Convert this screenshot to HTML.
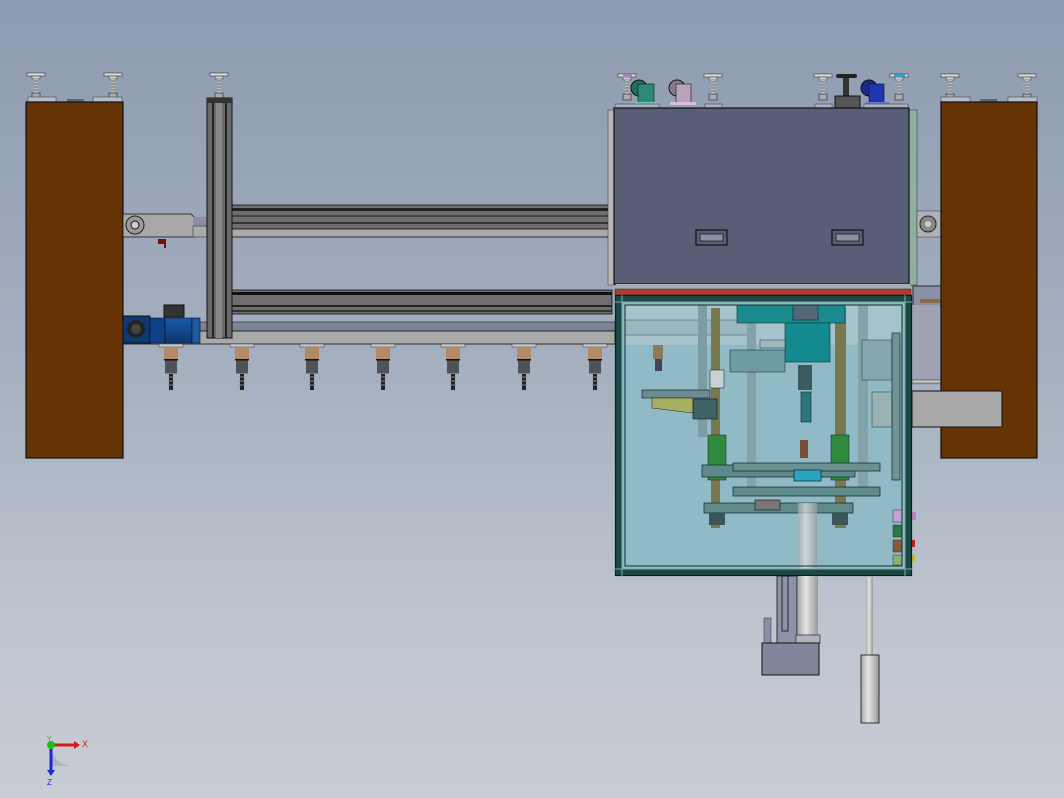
<!DOCTYPE html>
<html><head><meta charset="utf-8"><style>
html,body{margin:0;padding:0;width:1064px;height:798px;overflow:hidden}
body{background:linear-gradient(#8d9bb0 0%,#a4afbf 45%,#c0c6d0 80%,#c8ccd4 100%)}
svg{display:block}
</style></head><body>
<svg width="1064" height="798" viewBox="0 0 1064 798" xmlns="http://www.w3.org/2000/svg" font-family="Liberation Sans, sans-serif">
<defs>
<linearGradient id="cyl" x1="0" x2="1"><stop offset="0" stop-color="#aaa"/><stop offset=".4" stop-color="#e4e4e4"/><stop offset="1" stop-color="#999"/></linearGradient>
<linearGradient id="blu" x1="0" y1="0" x2="0" y2="1"><stop offset="0" stop-color="#1a5aa8"/><stop offset="1" stop-color="#0c3670"/></linearGradient>
<g id="foot"><rect x="-9" y="0" width="18" height="3" fill="#ddd" stroke="#333" stroke-width=".6"/><rect x="-4" y="3" width="8" height="3" fill="#ccc" stroke="#333" stroke-width=".5"/><rect x="-2" y="6" width="4" height="14" fill="#bbb"/><path d="M-2 8h4M-2 11h4M-2 14h4M-2 17h4" stroke="#555" stroke-width=".8"/><rect x="-4" y="20" width="8" height="6" fill="#aaa" stroke="#222" stroke-width=".6"/></g>
<g id="spin"><rect x="-12" y="0" width="24" height="3" fill="#c8c8cc" stroke="#333" stroke-width=".5"/><rect x="-7" y="3" width="14" height="12" fill="#b48a66"/><rect x="-7" y="15" width="14" height="1.5" fill="#111"/><rect x="-6" y="16.5" width="12" height="13" fill="#505258"/><rect x="-2" y="30" width="4" height="16" fill="#222"/><path d="M-3 33h6M-3 37h6M-3 41h6" stroke="#888" stroke-width="1"/></g>
</defs>

<!-- left brown panel -->
<use href="#foot" x="36" y="73"/><use href="#foot" x="113" y="73"/>
<rect x="28" y="97" width="28" height="5" fill="#b8bcc8" stroke="#333" stroke-width=".5"/>
<rect x="93" y="97" width="29" height="5" fill="#b8bcc8" stroke="#333" stroke-width=".5"/>
<rect x="67" y="99" width="17" height="3" fill="#666"/>
<rect x="26" y="102" width="97" height="356" fill="#663404" stroke="#111" stroke-width="1.2"/>

<!-- upper rail -->
<rect x="232" y="205" width="380" height="24" fill="#6e6e6e" stroke="#111" stroke-width=".8"/>
<rect x="232" y="208" width="380" height="3" fill="#222"/>
<rect x="232" y="215" width="380" height="2" fill="#444"/>
<rect x="232" y="222" width="380" height="2" fill="#333"/>
<rect x="232" y="229" width="380" height="8" fill="#aaa" stroke="#111" stroke-width=".8"/>
<!-- left bracket -->
<path d="M123 214h68l3 3v20h-71z" fill="#a8a8a8" stroke="#111" stroke-width=".8"/>
<rect x="193" y="217" width="14" height="9" fill="#8b8fa2"/>
<rect x="193" y="226" width="14" height="11" fill="#aaa" stroke="#222" stroke-width=".5"/>
<circle cx="135" cy="225" r="9" fill="#999" stroke="#222"/><circle cx="135" cy="225" r="4" fill="#ccc" stroke="#111"/>
<path d="M158 239h8v9h-2v-4h-6z" fill="#7a1010"/>
<!-- lower rail -->
<rect x="232" y="290" width="380" height="24" fill="#6e6e6e" stroke="#111" stroke-width=".8"/>
<rect x="232" y="292" width="380" height="3" fill="#111"/>
<rect x="232" y="305" width="380" height="2" fill="#222"/>
<rect x="232" y="310" width="380" height="2" fill="#333"/>
<rect x="200" y="322" width="415" height="9" fill="#7e8498" stroke="#222" stroke-width=".6"/>
<rect x="123" y="331" width="492" height="13" fill="#a9a9aa" stroke="#111" stroke-width=".8"/>
<!-- vertical post -->
<use href="#foot" x="219" y="73"/>
<rect x="207" y="98" width="25" height="240" fill="#6a6a6a" stroke="#111" stroke-width="1"/>
<rect x="207" y="98" width="25" height="5" fill="#333"/>
<rect x="212" y="103" width="2" height="235" fill="#222"/><rect x="225" y="103" width="2" height="235" fill="#222"/>
<rect x="216" y="103" width="6" height="235" fill="#888"/>
<!-- motor -->
<rect x="123" y="316" width="27" height="27" fill="#0d3a74" stroke="#111"/>
<circle cx="136" cy="329" r="9" fill="#222"/><circle cx="136" cy="329" r="5" fill="#444"/>
<rect x="150" y="318" width="15" height="25" fill="#0f4188" stroke="#111" stroke-width=".6"/>
<rect x="165" y="318" width="27" height="25" fill="url(#blu)" stroke="#111" stroke-width=".6"/>
<rect x="192" y="318" width="8" height="25" fill="#1b58a6" stroke="#111" stroke-width=".6"/>
<rect x="164" y="305" width="20" height="12" fill="#333" stroke="#111"/>
<!-- spindles -->
<use href="#spin" x="171" y="344"/><use href="#spin" x="242" y="344"/><use href="#spin" x="312" y="344"/><use href="#spin" x="383" y="344"/><use href="#spin" x="453" y="344"/><use href="#spin" x="524" y="344"/><use href="#spin" x="595" y="344"/><use href="#spin" x="663" y="344"/>

<!-- top feet & casters right assembly -->
<use href="#foot" x="627" y="74"/><use href="#foot" x="713" y="74"/><use href="#foot" x="823" y="74"/><use href="#foot" x="899" y="74"/><use href="#foot" x="950" y="74"/><use href="#foot" x="1027" y="74"/>
<rect x="623" y="74" width="9" height="3" fill="#b27fc0"/><rect x="894" y="74" width="11" height="3" fill="#3a9ac0"/>
<g fill="#333"><rect x="836" y="74" width="21" height="4" rx="2" fill="#222"/><rect x="843" y="78" width="6" height="18"/><rect x="835" y="96" width="25" height="12" fill="#555" stroke="#111"/></g>
<g><circle cx="639" cy="88" r="8" fill="#1f6e62" stroke="#111"/><rect x="638" y="84" width="16" height="19" fill="#2d8a78" stroke="#111" stroke-width=".6"/><rect x="634" y="102" width="24" height="3" fill="#76c4b4"/></g>
<g><circle cx="677" cy="88" r="8" fill="#8a7a90" stroke="#111"/><rect x="676" y="84" width="15" height="19" fill="#b8a4b8" stroke="#111" stroke-width=".6"/><rect x="670" y="102" width="26" height="3" fill="#d8c0d8"/></g>
<g><circle cx="869" cy="88" r="8" fill="#1b2a8a" stroke="#111"/><rect x="869" y="84" width="15" height="19" fill="#2235b0" stroke="#111" stroke-width=".6"/><rect x="865" y="102" width="24" height="3" fill="#6a7ae0"/></g>
<rect x="615" y="104" width="44" height="5" fill="#aab0c0" stroke="#333" stroke-width=".5"/>
<rect x="705" y="104" width="17" height="5" fill="#aab0c0" stroke="#333" stroke-width=".5"/>
<rect x="815" y="104" width="17" height="5" fill="#aab0c0" stroke="#333" stroke-width=".5"/>
<rect x="864" y="104" width="44" height="5" fill="#aab0c0" stroke="#333" stroke-width=".5"/>

<!-- cover -->
<rect x="608" y="110" width="7" height="175" fill="#b4b6b8" stroke="#333" stroke-width=".5"/>
<rect x="909" y="110" width="8" height="175" fill="#8fb0a0" stroke="#333" stroke-width=".5"/>
<rect x="614" y="108" width="295" height="176" fill="#575e75" stroke="#111" stroke-width="1.2"/>
<rect x="696" y="230" width="31" height="15" fill="#575e75" stroke="#111" stroke-width="1.2"/><rect x="700" y="234" width="23" height="7" fill="#8a90a4" stroke="#111" stroke-width=".7"/>
<rect x="832" y="230" width="31" height="15" fill="#575e75" stroke="#111" stroke-width="1.2"/><rect x="836" y="234" width="23" height="7" fill="#8a90a4" stroke="#111" stroke-width=".7"/>
<rect x="616" y="284" width="294" height="5" fill="#a8acb6"/>
<rect x="615" y="289" width="296" height="6" fill="#b03a2e" stroke="#222" stroke-width=".5"/>
<!-- right-side small parts -->
<rect x="917" y="211" width="24" height="26" fill="#aeb1b6" stroke="#333" stroke-width=".5"/>
<circle cx="928" cy="224" r="8" fill="#888" stroke="#222"/><circle cx="928" cy="224" r="3" fill="#ccc"/>
<path d="M913 286h30l12 20h-42z" fill="#8b90a6" stroke="#111" stroke-width=".8"/>
<rect x="920" y="299" width="30" height="4" fill="#8a6a48"/>
<path d="M912 305h28v80h-28z" fill="#9ea2b4"/>
<rect x="912" y="380" width="50" height="3" fill="#ccc" stroke="#222" stroke-width=".5"/>

<!-- right brown panel -->
<rect x="941" y="97" width="29" height="5" fill="#b8bcc8" stroke="#333" stroke-width=".5"/>
<rect x="1008" y="97" width="29" height="5" fill="#b8bcc8" stroke="#333" stroke-width=".5"/>
<rect x="980" y="99" width="17" height="3" fill="#666"/>
<rect x="941" y="102" width="96" height="356" fill="#663404" stroke="#111" stroke-width="1.2"/>
<rect x="912" y="391" width="90" height="36" fill="#a8a8a8" stroke="#111" stroke-width="1"/>

<!-- frame -->
<rect x="615" y="295" width="297" height="281" fill="#8fbac6"/>
<rect x="625" y="305" width="277" height="40" fill="#a6c2ca"/>
<rect x="625" y="320" width="130" height="15" fill="#9ab6be" stroke="#3a5a58" stroke-width=".5"/>
<!-- columns -->
<rect x="711" y="308" width="9" height="220" fill="#77784e"/>
<rect x="835" y="308" width="11" height="220" fill="#77784e"/>
<rect x="698" y="305" width="9" height="132" fill="#7e9ca4"/>
<rect x="747" y="305" width="9" height="182" fill="#84a2aa"/>
<rect x="858" y="305" width="10" height="182" fill="#84a2aa"/>
<rect x="708" y="435" width="18" height="45" fill="#2f8a3e" stroke="#123" stroke-width=".5"/>
<rect x="831" y="435" width="18" height="45" fill="#2f8a3e" stroke="#123" stroke-width=".5"/>
<!-- teal unit -->
<rect x="737" y="305" width="108" height="18" fill="#1a8a8c" stroke="#0a3a3a" stroke-width=".6"/>
<rect x="785" y="323" width="45" height="39" fill="#128a90" stroke="#0a3a3a" stroke-width=".6"/>
<rect x="793" y="305" width="25" height="15" fill="#567" stroke="#0a2a2a" stroke-width=".6"/>
<rect x="798" y="365" width="14" height="25" fill="#3a5a60"/>
<rect x="801" y="392" width="10" height="30" fill="#2e7478" stroke="#0a2a2a" stroke-width=".6"/>
<rect x="730" y="350" width="55" height="22" fill="#6d9ca2" stroke="#1c3c3c" stroke-width=".6"/>
<rect x="760" y="340" width="25" height="8" fill="#a0b8bc" stroke="#1c3c3c" stroke-width=".5"/>
<rect x="872" y="392" width="20" height="35" fill="#9ab2b4" stroke="#1c3c3c" stroke-width=".5"/>
<rect x="862" y="340" width="30" height="40" fill="#86a6ae" stroke="#1c3c3c" stroke-width=".5"/>
<!-- left bracket in frame -->
<rect x="653" y="345" width="10" height="14" fill="#8a7c5a"/><rect x="655" y="359" width="7" height="12" fill="#445"/>
<rect x="642" y="390" width="68" height="8" fill="#6a8e92" stroke="#112" stroke-width=".6"/>
<path d="M652 398h41v15l-41-5z" fill="#a6b060" stroke="#223" stroke-width=".5"/>
<rect x="693" y="399" width="24" height="20" fill="#3e6266" stroke="#112" stroke-width=".6"/>
<rect x="710" y="370" width="14" height="18" fill="#c8d0d0" stroke="#112" stroke-width=".5"/>
<!-- plates -->
<rect x="702" y="465" width="153" height="12" fill="#5e8a8a" stroke="#123" stroke-width=".7"/>
<rect x="733" y="463" width="147" height="8" fill="#6a9090" stroke="#123" stroke-width=".7"/>
<rect x="794" y="470" width="27" height="11" fill="#2aa4c0" stroke="#123" stroke-width=".7"/>
<rect x="800" y="440" width="8" height="18" fill="#7a4e30"/>
<rect x="733" y="487" width="147" height="9" fill="#5e8a8a" stroke="#123" stroke-width=".7"/>
<rect x="704" y="503" width="149" height="10" fill="#5e8a8a" stroke="#123" stroke-width=".7"/>
<rect x="755" y="500" width="25" height="10" fill="#777" stroke="#111" stroke-width=".6"/>
<rect x="709" y="513" width="16" height="12" fill="#3a5658"/><rect x="832" y="513" width="16" height="12" fill="#3a5658"/>
<rect x="798" y="503" width="19" height="72" fill="url(#cyl)" opacity=".7"/>
<!-- right bar & buttons -->
<rect x="892" y="333" width="8" height="147" fill="#6e9494" stroke="#123" stroke-width=".7"/>
<rect x="893" y="510" width="9" height="12" fill="#c8a0d8" stroke="#234" stroke-width=".5"/>
<rect x="893" y="525" width="9" height="12" fill="#2a7a3a" stroke="#234" stroke-width=".5"/>
<rect x="893" y="540" width="9" height="12" fill="#8a5a3a" stroke="#234" stroke-width=".5"/>
<rect x="893" y="555" width="9" height="10" fill="#8ab070" stroke="#234" stroke-width=".5"/>
<rect x="911" y="512" width="5" height="8" fill="#c080c0"/><rect x="911" y="540" width="4" height="7" fill="#c02020"/><rect x="911" y="555" width="4" height="6" fill="#c0c020"/>
<!-- frame border -->
<rect x="619" y="299" width="289" height="273" fill="none" stroke="#1b4a44" stroke-width="7"/>
<rect x="625" y="305" width="277" height="261" fill="none" stroke="#0f2f2c" stroke-width="1"/>
<rect x="615.5" y="295.5" width="296" height="280" fill="none" stroke="#0a1e1c" stroke-width="1.2"/>
<line x1="615" y1="302" x2="912" y2="302" stroke="#7aa8a8" stroke-width="1"/>
<line x1="615" y1="569" x2="912" y2="569" stroke="#7aa8a8" stroke-width="1"/>
<line x1="622" y1="295" x2="622" y2="576" stroke="#7aa8a8" stroke-width="1"/>
<line x1="905" y1="295" x2="905" y2="576" stroke="#7aa8a8" stroke-width="1"/>

<!-- below frame -->
<rect x="777" y="576" width="20" height="67" fill="#8d93a6" stroke="#111" stroke-width=".8"/>
<rect x="782" y="576" width="6" height="55" fill="none" stroke="#111" stroke-width=".8"/>
<rect x="798" y="576" width="20" height="62" fill="url(#cyl)"/>
<rect x="796" y="635" width="24" height="8" fill="#b0b4bc" stroke="#111" stroke-width=".6"/>
<rect x="764" y="618" width="7" height="25" fill="#8890a4" stroke="#333" stroke-width=".5"/>
<rect x="762" y="643" width="57" height="32" fill="#80879c" stroke="#111" stroke-width="1"/>
<rect x="866" y="577" width="7" height="78" fill="url(#cyl)"/>
<rect x="861" y="655" width="18" height="68" fill="url(#cyl)" stroke="#111" stroke-width=".8"/>

<!-- axis triad -->
<path d="M51 745 A21 21 0 0 0 72 766 L51 766Z" fill="#888" opacity=".35"/>
<line x1="51" y1="745" x2="76" y2="745" stroke="#d81818" stroke-width="3"/>
<path d="M74 741l6 4-6 4z" fill="#d81818"/>
<line x1="51" y1="745" x2="51" y2="772" stroke="#1a2ad0" stroke-width="3"/>
<path d="M47 770l4 6 4-6z" fill="#1a2ad0"/>
<circle cx="51" cy="745" r="4" fill="#1ebd1e"/>
<text x="82" y="747" font-size="9" fill="#d81818">X</text>
<text x="47" y="741" font-size="7" fill="#1ebd1e">Y</text>
<text x="47" y="785" font-size="8" fill="#1a2ad0">Z</text>
</svg>
</body></html>
